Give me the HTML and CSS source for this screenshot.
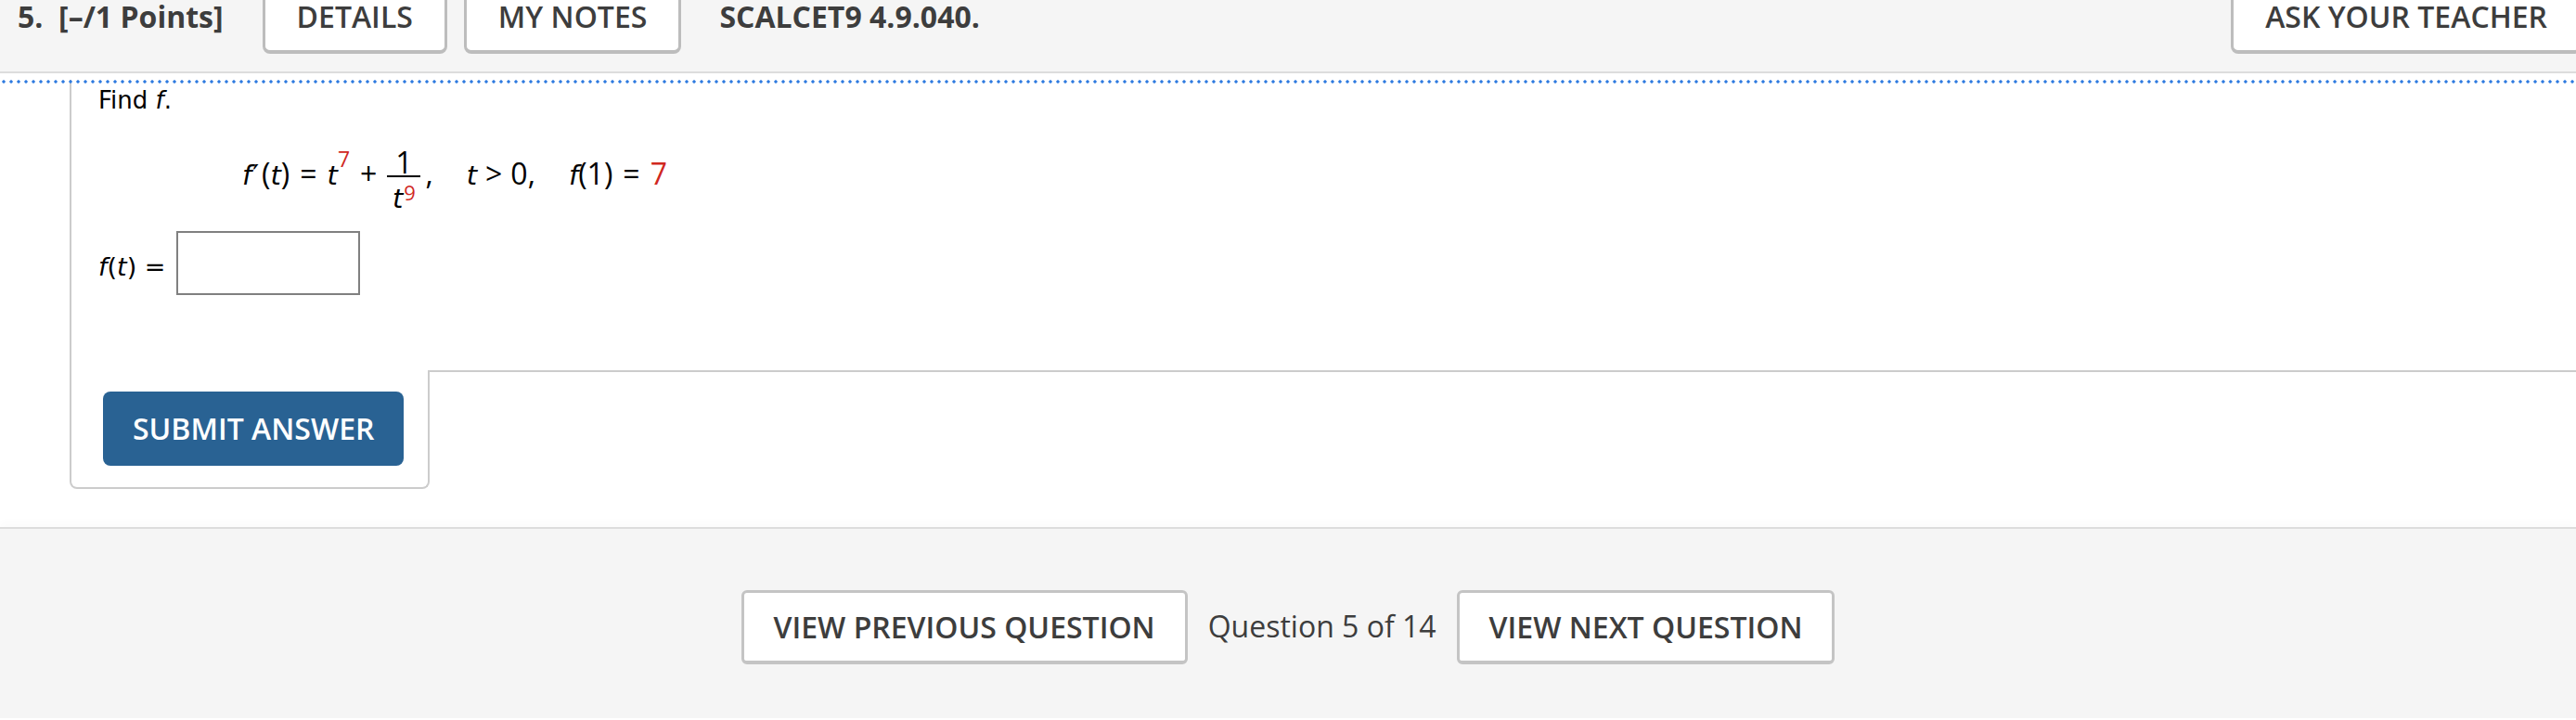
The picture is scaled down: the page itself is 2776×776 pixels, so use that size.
FILE: index.html
```html
<!DOCTYPE html>
<html>
<head>
<meta charset="utf-8">
<link rel="stylesheet" href="styles.css">
</head>
<body>
<header class="topbar">
  <div class="qnum">5.&nbsp; [–/1 Points]</div>
  <div class="tab">DETAILS</div>
  <div class="tab">MY NOTES</div>
  <div class="qcode">SCALCET9 4.9.040.</div>
  <div class="spacer"></div>
  <div class="tab tab-ask">ASK YOUR TEACHER</div>
</header>

<main class="question">
  <div class="qtop">
    <div class="dots"></div>
    <p class="find">Find <i>f</i>.</p>
    <div class="formula">
      <span class="m"><i>f</i><span class="prime">′</span>(<i>t</i>)</span>
      <span class="m op">=</span>
      <span class="m"><i>t</i><span class="red sup7">7</span></span>
      <span class="m op">+</span>
      <span class="frac">
        <span class="num">1</span>
        <span class="den"><i>t</i><span class="red sup9">9</span></span>
      </span>
      <span class="m comma">,</span>
      <span class="m gap"><i>t</i></span>
      <span class="m op op-narrow">&gt;</span>
      <span class="m">0,</span>
      <span class="m gap"><i>f</i>(1)</span>
      <span class="m op">=</span>
      <span class="m red">7</span>
    </div>
    <div class="answer">
      <span class="alabel"><i>f</i>(<i>t</i>) =</span>
      <span class="abox"></span>
    </div>
  </div>
  <div class="submit-row">
    <div class="submit-tab">
      <button class="submit">SUBMIT ANSWER</button>
    </div>
    <div class="filler"></div>
  </div>
</main>

<footer class="footer">
  <button class="navbtn">VIEW PREVIOUS QUESTION</button>
  <span class="qcount">Question 5 of 14</span>
  <button class="navbtn">VIEW NEXT QUESTION</button>
</footer>
</body>
</html>
```

FILE: styles.css
```css
html, body {
  margin: 0;
  padding: 0;
  background: #fff;
  overflow: hidden;
}
body {
  width: 2776px;
  height: 776px;
  font-family: "Open Sans", "Liberation Sans", sans-serif;
  color: #3d3d3d;
}

/* ---------- header ---------- */
.topbar {
  display: flex;
  align-items: flex-start;
  height: 77px;
  background: #f5f5f5;
  border-bottom: 2px solid #dddddd;
  padding-left: 19px;
  font-size: 32px;
  line-height: 36px;
}
.qnum {
  font-weight: 700;
  margin-right: 42px;
  white-space: pre;
}
.tab {
  margin-top: -13px;
  background: #fff;
  border: 3px solid #bdbdbd;
  border-bottom-width: 4px;
  border-radius: 0 0 8px 8px;
  padding: 10px 34px 18px;
  font-weight: 600;
}
.tab + .tab {
  margin-left: 18px;
}
.qcode {
  margin-left: 41px;
  font-weight: 700;
}
.spacer {
  flex: 1;
}
.tab-ask {
  margin-right: -6px;
}

/* ---------- question ---------- */
.question {
  margin-left: 75px;
}
.qtop {
  border-left: 2px solid #cccccc;
  padding: 0 0 81px 29px;
  font-family: "DejaVu Sans", Verdana, sans-serif;
  font-size: 26px;
  color: #000;
}
.dots {
  margin: 7px 0 0 -106px;
  width: 100vw;
  height: 4px;
  background: radial-gradient(circle, #2f7be0 1.4px, rgba(47,123,224,0) 1.9px) 0 0 / 8px 4px repeat-x;
}
.find {
  margin: 2px 0 0;
  line-height: 32px;
}

/* formula */
.formula {
  display: flex;
  align-items: center;
  margin: 30px 0 0 155px;
  font-family: "Open Sans", "DejaVu Sans", sans-serif;
  font-size: 32px;
  color: #000;
  white-space: pre;
}
.formula i {
  font-family: "DejaVu Sans", Verdana, sans-serif;
  font-size: 29px;
  line-height: 0;
}
.m {
  line-height: 40px;
  padding-bottom: 7px;
}
.prime {
  font-family: "DejaVu Sans", sans-serif;
  font-size: 30px;
  line-height: 0;
  margin: 0 3px 0 1px;
}
.op {
  margin: 0 11px;
}
.op-narrow {
  margin: 0 9px;
}
.comma {
  margin-left: 5px;
}
.gap {
  margin-left: 36px;
}
.red {
  color: #d0281f;
}
.sup7 {
  font-size: 23px;
  vertical-align: 19px;
  line-height: 0;
}
.sup9 {
  font-size: 22px;
  vertical-align: 8px;
  line-height: 0;
  margin-left: 1px;
}
.frac {
  display: flex;
  flex-direction: column;
  align-items: stretch;
  width: 36px;
  text-align: center;
}
.num {
  line-height: 28px;
  padding-top: 7px;
  border-bottom: 2px solid #000;
}
.den {
  line-height: 28px;
  padding-top: 7px;
}

/* answer */
.answer {
  display: flex;
  align-items: flex-start;
  margin-top: 23px;
}
.alabel {
  font-size: 27px;
  line-height: 30px;
  margin-top: 24px;
  margin-right: 12px;
  white-space: pre;
}
.abox {
  width: 194px;
  height: 65px;
  border: 2px solid #808080;
  background: #fff;
}

/* submit */
.submit-row {
  display: flex;
}
.submit-tab {
  border: 2px solid #cccccc;
  border-top: none;
  border-radius: 0 0 8px 8px;
  padding: 23px 26px 23px 34px;
}
.submit {
  display: block;
  height: 80px;
  padding: 0 32px;
  border: none;
  border-radius: 8px;
  background: #296293;
  color: #fff;
  font-family: "Open Sans", "Liberation Sans", sans-serif;
  font-size: 32px;
  font-weight: 600;
  line-height: 80px;
}
.filler {
  flex: 1;
  border-top: 2px solid #cccccc;
}

/* ---------- footer ---------- */
.footer {
  margin-top: 41px;
  height: 206px;
  box-sizing: border-box;
  background: #f5f5f5;
  border-top: 2px solid #dddddd;
  box-shadow: 0 -6px 8px rgba(0,0,0,0.015);
  display: flex;
  justify-content: center;
  align-items: flex-start;
  gap: 22px;
  padding-top: 66px;
  font-size: 32px;
  line-height: 36px;
}
.navbtn {
  background: #fff;
  border: 3px solid #c4c4c4;
  border-bottom-width: 4px;
  border-radius: 6px;
  padding: 19px 32px 18px;
  font-family: "Open Sans", "Liberation Sans", sans-serif;
  font-size: 32px;
  font-weight: 600;
  line-height: 36px;
  color: #3d3d3d;
}
.qcount {
  margin-top: 21px;
  color: #3d3d3d;
}
```
